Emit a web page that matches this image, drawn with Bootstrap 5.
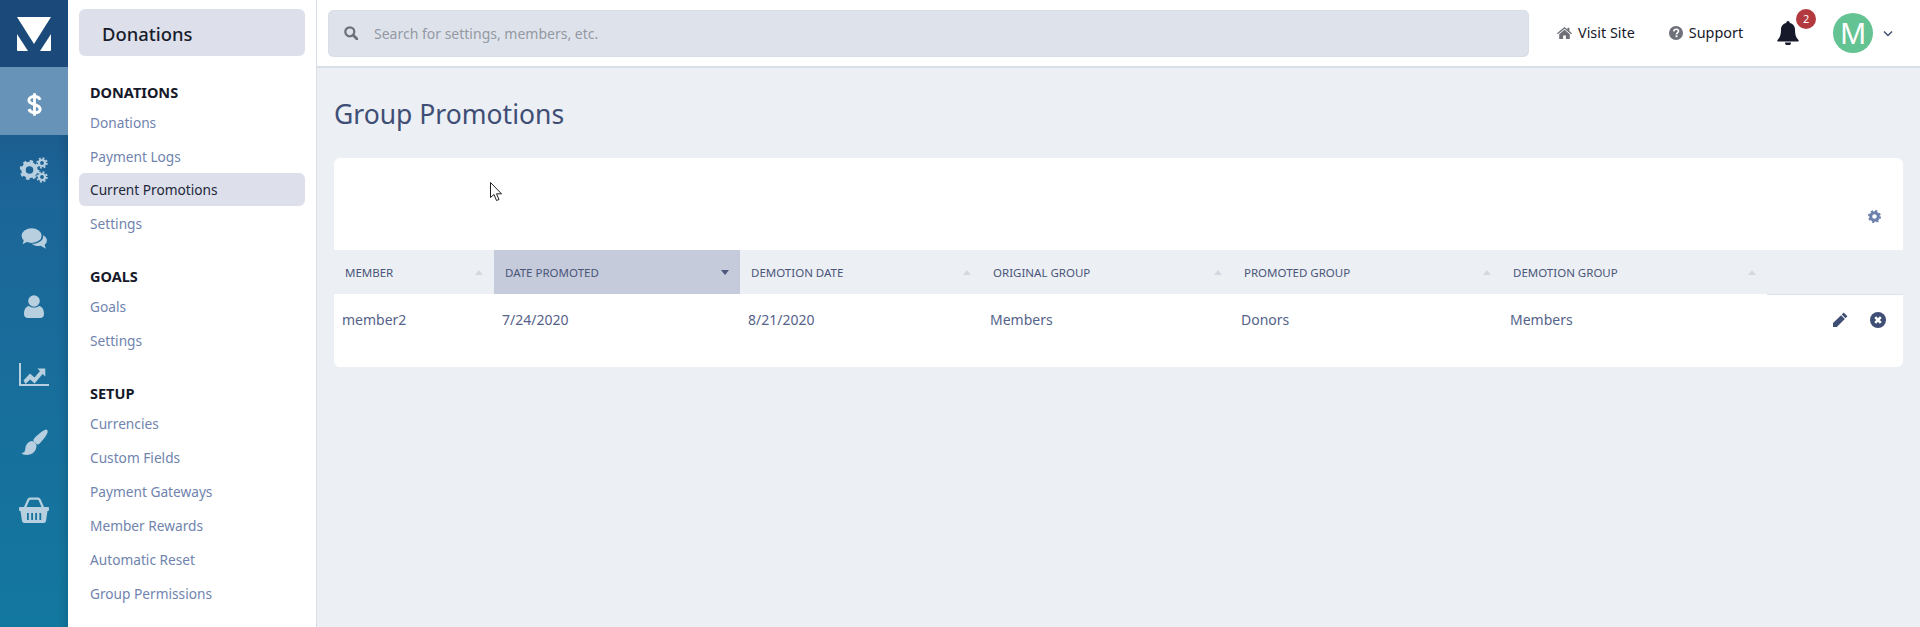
<!DOCTYPE html>
<html lang="en">
<head>
<meta charset="utf-8">
<title>Group Promotions</title>
<link href="https://cdn.jsdelivr.net/npm/bootstrap@5.3.0/dist/css/bootstrap.min.css" rel="stylesheet">
<style>
html,body{height:100%;}
body{font-family:"Noto Sans","Open Sans",sans-serif;background:#eceff4;color:#3f4e74;font-size:14px;overflow:hidden;}
.app-shell{height:627px;}
.rail{width:68px;flex:none;background:linear-gradient(180deg,#1b4a7a 0%,#1c6598 30%,#13789f 100%);box-shadow:inset -8px 0 8px -6px rgba(0,0,0,.14);}
.rail-item{height:68px;color:#b7cfdf;padding-top:2px;}
.rail-logo{height:67px;background:#1b4a7a;}
.rail-item.is-on{background:#6793b8;color:#fff;padding-top:6px;}
.side{width:249px;flex:none;background:#fff;border-right:1px solid #d9dfe8;padding:9px 11px 0 11px;}
.side-title{height:47px;background:#dde0ea;border-radius:6px;padding:2px 0 0 23px;font-size:18.4px;font-weight:500;color:#181c2b;margin-bottom:26px;}
.side-head{font-size:14.5px;font-weight:700;color:#16192a;margin:0;padding-left:11px;line-height:20px;}
.side-group{margin-bottom:25px;}
.side-link{display:block;height:34px;line-height:33px;padding-left:11px;color:#7084ae;font-size:13.7px;text-decoration:none;border-radius:6px;}
.side-head + .side-link{margin-top:4px;}
.side-link.is-on{background:#dde0ea;color:#22273a;height:33px;margin-top:-1px;margin-bottom:1px;}
.topbar{height:68px;background:#fff;border-bottom:2px solid #d9dfe8;padding:0 12px 0 11px;}
.finder{height:47px;background:#dee3eb;border-radius:6px;width:1201px;padding-left:16px;color:#9498a3;font-size:14px;box-shadow:inset 0 0 0 1px #d8dee6;}
.finder svg{margin-right:16px;}
.tlink{color:#16192a;font-size:14.4px;text-decoration:none;}
.tlink svg{margin-right:6px;vertical-align:-1px;}
.gap-visit{margin-left:28px;}
.gap-wide{margin-left:34px;}
.gap-chev{margin-left:10px;}
.bell-wrap{width:22px;height:24px;}
.bell-count{position:absolute;top:-12px;left:19px;width:20px;height:20px;border-radius:50%;background:#b23a3f;color:#fff;font-size:11px;line-height:20px;text-align:center;}
.avatar{width:40px;height:40px;border-radius:50%;background:#64c393;color:#fff;font-size:29px;line-height:40px;text-align:center;}
.main-pane{padding:0 17px 0 17px;}
.page-heading{font-size:26.5px;font-weight:400;color:#3f4e74;margin:0;padding-top:24px;height:90px;line-height:44px;}
.data-panel{background:#fff;border-radius:6px;width:1569px;height:209px;overflow:hidden;}
.panel-tools{height:92px;padding:0 22px 27px 0;}
.promo-table{table-layout:fixed;width:1569px;margin:0;}
.promo-table th{height:44px;background:#eceff4;font-size:11.5px;font-weight:400;text-transform:uppercase;color:#4a567a;padding:1px 11px 0 11px;vertical-align:middle;border:0;white-space:nowrap;}
.promo-table th.is-sorted{background:#c5cbdb;}
.promo-table th:last-child{border-bottom:1px solid #dfe3ea;}
.promo-table td{height:52px;padding:0 8px 1px;font-size:14px;color:#55628a;vertical-align:middle;border:0;}
.th-inner{display:flex;justify-content:space-between;align-items:center;}
.sort-up{width:0;height:0;border-left:4.500px solid transparent;border-right:4.500px solid transparent;border-bottom:5px solid #d3d8e1;}
.sort-down{width:0;height:0;border-left:4.500px solid transparent;border-right:4.500px solid transparent;border-top:5px solid #4a567a;}
.c1{width:160px}.c2{width:246px}.c3{width:242px}.c4{width:251px}.c5{width:269px}.c6{width:265px}.c7{width:136px}
.promo-table td.row-actions{padding-right:17px;color:#3f4e74;}
.act-gap{gap:22px;}
.pointer-mark{position:absolute;left:490px;top:182px;}
</style>
</head>
<body>
<div class="app-shell d-flex position-relative">
  <nav class="rail d-flex flex-column">
    <div class="rail-logo d-flex align-items-center justify-content-center">
      <svg width="36" height="36" viewBox="0 0 36 36" fill="#fff"><path d="M1 1h34L18 28z"/><path d="M1 18l11 17H2q-1 0-1-1z"/><path d="M35 18L24 35h10q1 0 1-1z"/></svg>
    </div>
    <div class="rail-item is-on d-flex align-items-center justify-content-center">
      <svg width="15" height="25" viewBox="0 0 16 26" fill="none" stroke="currentColor" stroke-width="3.2"><path d="M14 8c-1-2.500-3-3.500-6-3.500S2 6 2 8.500c0 5.500 12 3.500 12 9.500 0 2.500-2.500 3.700-6 3.700s-5-1.300-6-3.700"/><path d="M8 1v24" stroke-width="3"/></svg>
    </div>
    <div class="rail-item d-flex align-items-center justify-content-center">
      <svg width="28" height="26" viewBox="0 0 28 26" fill="currentColor"><g><circle cx="9.500" cy="13" r="6" fill="none" stroke="currentColor" stroke-width="4.500"/><circle cx="9.500" cy="13" r="8.700" fill="none" stroke="currentColor" stroke-width="2.500" stroke-dasharray="3.400 3.430"/></g><g><circle cx="22" cy="6" r="3" fill="none" stroke="currentColor" stroke-width="2.200"/><circle cx="22" cy="6" r="4.800" fill="none" stroke="currentColor" stroke-width="1.800" stroke-dasharray="1.900 1.870"/></g><g><circle cx="22" cy="20" r="3" fill="none" stroke="currentColor" stroke-width="2.200"/><circle cx="22" cy="20" r="4.800" fill="none" stroke="currentColor" stroke-width="1.800" stroke-dasharray="1.900 1.870"/></g></svg>
    </div>
    <div class="rail-item d-flex align-items-center justify-content-center">
      <svg width="26" height="21" viewBox="0 0 27 22" fill="currentColor"><ellipse cx="11" cy="8" rx="10.500" ry="7.700"/><path d="M3 12l-1.500 5 6-3z"/><path d="M23 7.500c2.500 1.300 4 3.200 4 5.500 0 2-1 3.500-2.500 4.700l1.500 4-5.500-3c-3 .5-7 0-9.500-2.200 6 .3 13-3 12-9z"/></svg>
    </div>
    <div class="rail-item d-flex align-items-center justify-content-center">
      <svg width="20" height="23" viewBox="0 0 20 23" fill="currentColor"><circle cx="10" cy="6" r="5.800"/><path d="M0 19c0-5 2-7.500 5-8 1.500 1 3 1.500 5 1.500s3.500-.5 5-1.500c3 .5 5 3 5 8 0 2.500-1.500 4-4 4H4c-2.500 0-4-1.500-4-4z"/></svg>
    </div>
    <div class="rail-item d-flex align-items-center justify-content-center">
      <svg width="30" height="23" viewBox="0 0 30 23" fill="currentColor"><path d="M0 0h2v21h28v2H0z"/><path d="M4.500 17.500l6.500-7 4.500 4 5.500-6.500-2.700-2.500h8v8l-2.700-2.500-8 9.500-4.500-4-4.500 4.500z"/></svg>
    </div>
    <div class="rail-item d-flex align-items-center justify-content-center">
      <svg width="27" height="27" viewBox="0 0 27 27" fill="currentColor"><path d="M25 .5c1.500 0 2 1.500 1.500 3-1 3-5 8.500-8.500 11.500-1 .8-2 .8-3-.2L13 12.700c-.8-1-.8-2 0-3C16 6 22 1.500 25 .5z"/><path d="M11 12c2 .3 4 2.300 4.500 4.500C15.500 22 11.500 26 5.500 26c-2.500 0-4.500-1-5-2 2 0 3.500-1 3.700-3.500C4.500 15.500 7.500 12.200 11 12z"/></svg>
    </div>
    <div class="rail-item d-flex align-items-center justify-content-center">
      <svg width="30" height="26" viewBox="0 0 30 26" fill="currentColor"><path d="M1 10h28q1 0 1 1v2q0 1-1 1h-.5L27 24q-.3 2-2.500 2h-19Q3.300 26 3 24L1.500 14H1q-1 0-1-1v-2q0-1 1-1zm7 6v7h1.800v-7zm4.200 0v7H14v-7zm4 0v7H18v-7zm4.200 0v7h1.800v-7z" fill-rule="evenodd"/><path d="M5 10l3.500-8q.8-1.500 2.500-1.500h8q1.700 0 2.500 1.500L25 10h-2.500l-2.800-6.500q-.3-.7-1-.7h-7.400q-.7 0-1 .7L7.500 10z"/></svg>
    </div>
  </nav>

  <aside class="side">
    <div class="side-title d-flex align-items-center">Donations</div>
    <div class="side-group">
      <h6 class="side-head">DONATIONS</h6>
      <a class="side-link" href="#">Donations</a>
      <a class="side-link" href="#">Payment Logs</a>
      <a class="side-link is-on" href="#">Current Promotions</a>
      <a class="side-link" href="#">Settings</a>
    </div>
    <div class="side-group">
      <h6 class="side-head">GOALS</h6>
      <a class="side-link" href="#">Goals</a>
      <a class="side-link" href="#">Settings</a>
    </div>
    <div class="side-group">
      <h6 class="side-head">SETUP</h6>
      <a class="side-link" href="#">Currencies</a>
      <a class="side-link" href="#">Custom Fields</a>
      <a class="side-link" href="#">Payment Gateways</a>
      <a class="side-link" href="#">Member Rewards</a>
      <a class="side-link" href="#">Automatic Reset</a>
      <a class="side-link" href="#">Group Permissions</a>
    </div>
  </aside>

  <div class="flex-grow-1 d-flex flex-column">
    <header class="topbar d-flex align-items-center">
      <div class="finder d-flex align-items-center">
        <svg width="14" height="14" viewBox="0 0 14 14" fill="none" stroke="#6d7078" stroke-width="2.200"><circle cx="5.800" cy="5.800" r="4.500"/><path d="M9 9l4 4" stroke-width="2.800" stroke-linecap="round"/></svg>
        <span>Search for settings, members, etc.</span>
      </div>
      <a class="tlink d-flex align-items-center gap-visit" href="#">
        <svg width="15" height="12" viewBox="0 0 15 12" fill="#6d7078"><path d="M7.500 0L0 6.300l.8.900L7.500 1.700l6.700 5.500.8-.9-2.600-2.200V.8h-1.900v1.800z"/><path d="M7.500 2.800L2.200 7.200V12h3.900V8.500h2.800V12h3.900V7.200z"/></svg>
        Visit Site</a>
      <a class="tlink d-flex align-items-center gap-wide" href="#">
        <svg width="14" height="14" viewBox="0 0 14 14"><circle cx="7" cy="7" r="7" fill="#6d7078"/><path d="M4.700 5.300C4.900 4 5.900 3.200 7.200 3.200c1.400 0 2.300.8 2.300 1.900 0 1.800-2 1.700-2 3.300" fill="none" stroke="#fff" stroke-width="1.600"/><rect x="6.500" y="9.400" width="2" height="1.800" fill="#fff"/></svg>
        Support</a>
      <div class="bell-wrap position-relative gap-wide">
        <svg class="d-block" width="22" height="24" viewBox="0 0 22 24" fill="#16192a"><path d="M11 0a1.700 1.700 0 0 1 1.700 1.900C16 2.500 18 5 18 8.500c0 6 1.500 8.500 3.500 10.500.5.500.3 1.500-.7 1.500H1.200c-1 0-1.200-1-.7-1.500C2.500 17 4 14.500 4 8.500 4 5 6 2.500 9.300 1.900A1.700 1.700 0 0 1 11 0z"/><path d="M8 21.500h6a3 3 0 0 1-6 0z"/></svg>
        <span class="bell-count">2</span>
      </div>
      <div class="avatar gap-wide">M</div>
      <svg class="gap-chev" width="10" height="7" viewBox="0 0 10 7" fill="none" stroke="#3f4e74" stroke-width="1.400"><path d="M1 1.500l4 4 4-4"/></svg>
    </header>

    <main class="main-pane">
      <h1 class="page-heading">Group Promotions</h1>
      <section class="data-panel">
        <div class="panel-tools d-flex justify-content-end align-items-end">
          <svg width="13" height="13" viewBox="0 0 13 13"><circle cx="6.500" cy="6.500" r="3.800" fill="none" stroke="#6c80ac" stroke-width="3"/><circle cx="6.500" cy="6.500" r="5.600" fill="none" stroke="#6c80ac" stroke-width="1.800" stroke-dasharray="2.200 2.200"/></svg>
        </div>
        <table class="table promo-table">
          <colgroup><col class="c1"><col class="c2"><col class="c3"><col class="c4"><col class="c5"><col class="c6"><col class="c7"></colgroup>
          <thead>
            <tr>
              <th><div class="th-inner">Member<i class="sort-up"></i></div></th>
              <th class="is-sorted"><div class="th-inner">Date Promoted<i class="sort-down"></i></div></th>
              <th><div class="th-inner">Demotion Date<i class="sort-up"></i></div></th>
              <th><div class="th-inner">Original Group<i class="sort-up"></i></div></th>
              <th><div class="th-inner">Promoted Group<i class="sort-up"></i></div></th>
              <th><div class="th-inner">Demotion Group<i class="sort-up"></i></div></th>
              <th></th>
            </tr>
          </thead>
          <tbody>
            <tr>
              <td>member2</td>
              <td>7/24/2020</td>
              <td>8/21/2020</td>
              <td>Members</td>
              <td>Donors</td>
              <td>Members</td>
              <td class="row-actions">
                <div class="d-flex justify-content-end align-items-center act-gap">
                  <svg width="16" height="16" viewBox="0 0 16 16" fill="#3f4e74"><path d="M11.700.6l3.700 3.700-1.900 1.900-3.700-3.700z"/><path d="M9.100 3.200l3.700 3.700-8 8H1v-3.800z"/></svg>
                  <svg width="16" height="16" viewBox="0 0 16 16"><circle cx="8" cy="8" r="8" fill="#3f4e74"/><path d="M5.200 5.200l5.600 5.600M10.800 5.200l-5.600 5.600" stroke="#fff" stroke-width="2.600"/></svg>
                </div>
              </td>
            </tr>
          </tbody>
        </table>
      </section>
    </main>
  </div>
  <svg class="pointer-mark" width="13" height="20" viewBox="0 0 13 20"><path d="M.5.500v15l3.500-3 2.500 6 2.500-1-2.500-5.700h5z" fill="#fff" stroke="#222" stroke-width="1"/></svg>
</div>
<script src="https://cdn.jsdelivr.net/npm/bootstrap@5.3.0/dist/js/bootstrap.bundle.min.js"></script>
</body>
</html>
